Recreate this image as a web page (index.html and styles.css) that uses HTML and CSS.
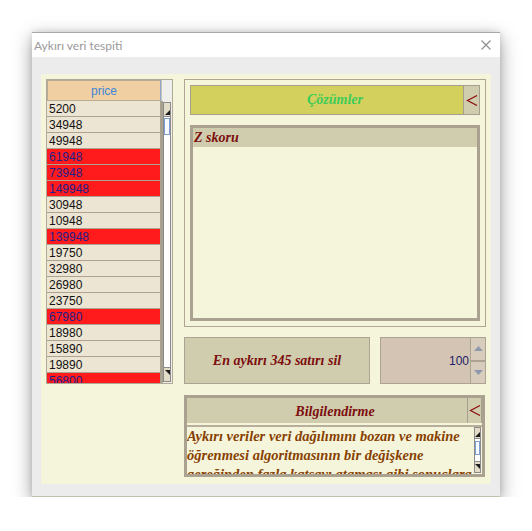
FILE: index.html
```html
<!DOCTYPE html>
<html lang="tr">
<head>
<meta charset="utf-8">
<title>Aykırı veri tespiti</title>
<link rel="stylesheet" href="styles.css">
</head>
<body>
<div class="window">
  <div class="titlebar">
    <span class="title">Aykırı veri tespiti</span>
    <svg class="close" width="10" height="10" viewBox="0 0 10 10"><path d="M0.5 0.5 L9.5 9.5 M9.5 0.5 L0.5 9.5" stroke="#8c8c8c" stroke-width="1.1" fill="none"/></svg>
  </div>
  <div class="client">
    <div class="panel">
      <div class="list">
        <div class="list-head">
          <div class="head-cell">price</div>
          <div class="head-corner"></div>
        </div>
        <div class="list-body">
          <div class="rows">
            <div class="row">5200</div>
            <div class="row">34948</div>
            <div class="row">49948</div>
            <div class="row out">61948</div>
            <div class="row out">73948</div>
            <div class="row out">149948</div>
            <div class="row">30948</div>
            <div class="row">10948</div>
            <div class="row out">139948</div>
            <div class="row">19750</div>
            <div class="row">32980</div>
            <div class="row">26980</div>
            <div class="row">23750</div>
            <div class="row out">67980</div>
            <div class="row">18980</div>
            <div class="row">15890</div>
            <div class="row">19890</div>
            <div class="row out">56800</div>
          </div>
          <div class="vscroll">
            <div class="sb-btn up"></div>
            <div class="sb-track"><div class="sb-thumb"></div></div>
            <div class="sb-btn down"></div>
          </div>
        </div>
      </div>
      <div class="right">
        <div class="frame">
          <div class="bar">
            <div class="bar-label green">Çözümler</div>
            <div class="chev"><svg width="12" height="13" viewBox="0 0 12 13"><path d="M11 1.5 L1.5 6.5 L11 11.5" stroke="#8b0a0a" stroke-width="1.2" fill="none"/></svg></div>
          </div>
          <div class="zpanel">
            <div class="zhead">Z skoru</div>
            <div class="zbody"></div>
          </div>
        </div>
        <div class="actions">
          <div class="btn">En aykırı 345 satırı sil</div>
          <div class="spinner">
            <div class="spin-value">100</div>
            <div class="spin-btns">
              <div class="spin-up"><svg width="9" height="5" viewBox="0 0 9 5"><path d="M0 5 L4.5 0 L9 5 Z" fill="#8e99ab"/></svg></div>
              <div class="spin-down"><svg width="9" height="5" viewBox="0 0 9 5"><path d="M0 0 L4.5 5 L9 0 Z" fill="#8e99ab"/></svg></div>
            </div>
          </div>
        </div>
        <div class="info">
          <div class="info-head">
            <div class="bar-label maroon">Bilgilendirme</div>
            <div class="chev"><svg width="12" height="13" viewBox="0 0 12 13"><path d="M11 1.5 L1.5 6.5 L11 11.5" stroke="#8b0a0a" stroke-width="1.2" fill="none"/></svg></div>
          </div>
          <div class="info-body">
            <div class="info-text">Aykırı veriler veri dağılımını bozan ve makine öğrenmesi algoritmasının bir değişkene gereğinden fazla katsayı ataması gibi sonuçlara yol açabilir.</div>
            <div class="vscroll small">
              <div class="sb-btn up"></div>
              <div class="sb-track"><div class="sb-thumb"></div></div>
              <div class="sb-btn down"></div>
            </div>
          </div>
        </div>
      </div>
    </div>
  </div>
</div>
</body>
</html>
```
FILE: styles.css
```css
* { box-sizing: border-box; }
html, body { margin: 0; padding: 0; background: #ffffff; }
body { padding: 32px 0 0 32px; }

.window {
  width: 468px;
  height: 465px;
  background: #ececec;
  box-shadow: 0 6px 18px rgba(0,0,0,0.38), 0 0 6px rgba(0,0,0,0.12);
  border-bottom: 1px solid #c2c1ad;
  display: flex;
  flex-direction: column;
}
.titlebar {
  height: 25px;
  background: #ffffff;
  border-top: 1px solid #a8a8a8;
  display: flex;
  align-items: center;
  justify-content: space-between;
  padding: 0 9px 0 2px;
}
.title {
  font-family: Lato, "Noto Sans", sans-serif;
  font-size: 12px;
  color: #9a9a9a;
}
.close { display: block; }

.client { padding: 17px 9px 12px 9px; }
.panel {
  width: 450px;
  height: 410px;
  background: #f5f5dc;
  padding: 5px;
  display: flex;
  gap: 11px;
}

/* list */
.list {
  width: 127px;
  height: 305px;
  border: 1px solid #b2aa99;
  background: #efefe8;
  display: flex;
  flex-direction: column;
}
.list-head { display: flex; height: 21px; }
.head-cell {
  width: 114px;
  background: #f0cfa2;
  border: 1px solid #b9ab93;
  border-right: 1px solid #8fa6cf;
  color: #3f86d8;
  font-family: "Liberation Sans", Arial, sans-serif;
  font-size: 12px;
  text-align: center;
  line-height: 20px;
}
.head-corner { flex: 1; background: #eeeeea; border-left: 1px solid #c8c2b5; }
.list-body { display: flex; flex: 1; overflow: hidden; }
.rows {
  width: 117px;
  border-right: 3px solid #a9a190;
  overflow: hidden;
}
.row {
  height: 16px;
  background: #ece5d4;
  border-bottom: 1px solid #aca392;
  padding-left: 2px;
  font-family: "Liberation Sans", Arial, sans-serif;
  font-size: 12px;
  line-height: 16px;
  color: #111111;
}
.row.out { background: #ff1b1b; color: #22208c; }

.vscroll {
  width: 7px;
  margin: 1px 1px 1px 0;
  border: 1px solid #8b8b8b;
  background: #ffffff;
  display: flex;
  flex-direction: column;
}
.list .vscroll { margin-left: 0; width: 8px; }
.sb-btn {
  height: 14px;
  background: #e3dcc6;
  position: relative;
}
.sb-btn.up { border-bottom: 1px solid #8b8b8b; }
.sb-btn.down { border-top: 1px solid #8b8b8b; }
.sb-btn.up::after {
  content: "";
  position: absolute;
  right: 0; bottom: 1px;
  border-left: 5px solid transparent;
  border-bottom: 5px solid #1c1c1c;
}
.sb-btn.down::after {
  content: "";
  position: absolute;
  right: 0; top: 2px;
  border-left: 5px solid transparent;
  border-top: 5px solid #1c1c1c;
}
.sb-track { flex: 1; position: relative; background: #ffffff; }
.sb-thumb {
  height: 17px;
  margin-top: 1px;
  border: 1px solid #7e9fd6;
  background: #f8fbff;
}

/* right column */
.right { width: 302px; display: flex; flex-direction: column; }
.frame {
  height: 248px;
  border: 1px solid #afa592;
  padding: 5px 5px 5px 5px;
  display: flex;
  flex-direction: column;
  gap: 10px;
}
.bar {
  height: 30px;
  border: 1px solid #a69e8e;
  background: #d3d05d;
  display: flex;
}
.bar-label {
  flex: 1;
  text-align: center;
  padding-left: 16px;
  font-family: "Liberation Serif", "Times New Roman", serif;
  font-size: 14px;
  font-weight: bold;
  font-style: italic;
}
.bar .bar-label { line-height: 28px; }
.green { color: #3ccc5a; }
.maroon { color: #7d0d0d; }
.chev {
  width: 16px;
  background: #cfcdae;
  border-left: 1px solid #a69e8e;
  display: flex;
  align-items: center;
  justify-content: center;
}
.zpanel {
  height: 196px;
  border: 3px solid #aaa190;
  background: #f5f5dc;
  display: flex;
  flex-direction: column;
}
.zhead {
  height: 19px;
  background: #cfcdae;
  padding-left: 1px;
  font-family: "Liberation Serif", "Times New Roman", serif;
  font-size: 14px;
  font-weight: bold;
  font-style: italic;
  color: #7d0d0d;
  line-height: 19px;
}

.actions {
  margin-top: 10px;
  height: 47px;
  display: flex;
  gap: 10px;
}
.btn {
  width: 186px;
  border: 1px solid #aca392;
  background: #cfcdae;
  display: flex;
  align-items: center;
  justify-content: center;
  font-family: "Liberation Serif", "Times New Roman", serif;
  font-size: 14px;
  font-weight: bold;
  font-style: italic;
  color: #7d0d0d;
}
.spinner {
  flex: 1;
  border: 1px solid #aca392;
  background: #d3c4b3;
  display: flex;
}
.spin-value {
  flex: 1;
  text-align: right;
  padding-right: 1px;
  align-self: center;
  font-family: "Liberation Sans", Arial, sans-serif;
  font-size: 12px;
  color: #1c1c6a;
}
.spin-btns {
  width: 15px;
  border-left: 1px solid #aca392;
  display: flex;
  flex-direction: column;
  background: #d8cdbd;
}
.spin-up, .spin-down {
  flex: 1;
  display: flex;
  align-items: center;
  justify-content: center;
}
.spin-up { border-bottom: 2px solid #aca392; }

.info {
  margin-top: 11px;
  width: 301px;
  height: 82px;
  border: 3px solid #aaa190;
  background: #f5f5dc;
  display: flex;
  flex-direction: column;
}
.info-head {
  height: 27px;
  background: #cfcdae;
  display: flex;
  border-bottom: 2px solid #f5f5dc;
}
.info-head .bar-label { line-height: 27px; }
.info-head .chev { width: 15px; border-right: 1px solid #a69e8e; }
.info-body {
  flex: 1;
  display: flex;
  overflow: hidden;
  border-top: 2px solid #b7ae9c;
}
.info-text {
  flex: 1;
  padding: 0;
  font-family: "Liberation Serif", "Times New Roman", serif;
  font-size: 14.5px;
  font-weight: bold;
  font-style: italic;
  line-height: 19px;
  color: #874100;
  overflow: hidden;
}
.vscroll.small { margin: 0 1px 1px 2px; }
.vscroll.small .sb-btn { height: 11px; }
.vscroll.small .sb-thumb { height: 14px; margin-top: 2px; }
```
